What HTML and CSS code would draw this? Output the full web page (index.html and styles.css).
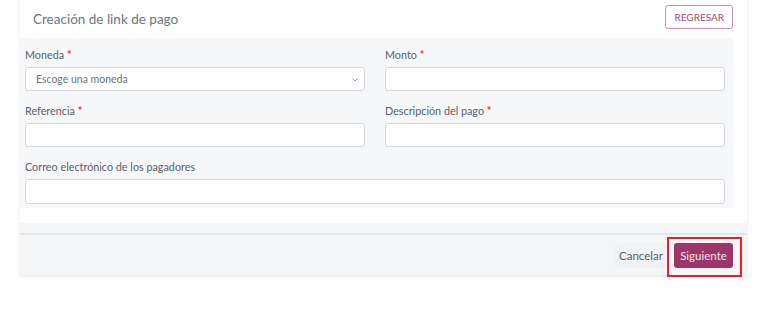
FILE: index.html
```html
<!DOCTYPE html>
<html lang="es">
<head>
<meta charset="utf-8">
<link rel="stylesheet" href="styles.css">
</head>
<body>
<div class="card">
  <div class="card-header">
    <h1 class="title">Creación de link de pago</h1>
    <button class="btn btn-outline" type="button">REGRESAR</button>
  </div>
  <div class="card-body">
    <form class="form-panel">
      <div class="field">
        <label class="label">Moneda <span class="req">*</span></label>
        <div class="select">
          <span class="placeholder">Escoge una moneda</span>
          <svg class="chev" width="6" height="4" viewBox="0 0 6 4"><path d="M0.6 0.6l2.4 2.4 2.4-2.4" fill="none" stroke="#8a9096" stroke-width="0.9"/></svg>
        </div>
      </div>
      <div class="field">
        <label class="label">Monto <span class="req">*</span></label>
        <div class="input"></div>
      </div>
      <div class="field">
        <label class="label">Referencia <span class="req">*</span></label>
        <div class="input"></div>
      </div>
      <div class="field">
        <label class="label">Descripción del pago <span class="req">*</span></label>
        <div class="input"></div>
      </div>
      <div class="field full">
        <label class="label">Correo electrónico de los pagadores</label>
        <div class="input tall"></div>
      </div>
    </form>
    <div class="spacer"></div>
  </div>
  <div class="card-footer">
    <div class="footer-inner">
      <button class="btn btn-light" type="button">Cancelar</button>
      <span class="highlight"><button class="btn btn-primary" type="button">Siguiente</button></span>
    </div>
  </div>
</div>
</body>
</html>
```
FILE: styles.css
```css
* { box-sizing: border-box; }
html, body { height: 100%; }
body {
  margin: 0;
  min-height: 309px;
  padding-bottom: 20px;
  background: #fff;
  font-family: Lato, "Open Sans", sans-serif;
}
.card {
  margin-left: 20px;
  width: 727px;
  box-shadow: 0 1px 3px rgba(0,0,0,0.12);
  background: #fff;
}
.card-header {
  height: 38px;
  display: flex;
  align-items: center;
  justify-content: space-between;
  padding: 0 14px 0 13px;
}
.title {
  margin: 0;
  font-size: 13.5px;
  font-weight: 400;
  color: #6c757d;
  padding-bottom: 1px;
}
.btn {
  font-family: inherit;
  cursor: pointer;
  border-radius: 3px;
}
.btn-outline {
  height: 24px;
  padding: 0 8px;
  background: #fff;
  border: 1px solid #cf8db0;
  color: #a34b7a;
  font-size: 10px;
  margin-top: -5px;
}
.card-body {
  background: #fff;
}
.form-panel {
  width: 713px;
  height: 170px;
  background: #f6f7f9;
  padding: 10px 8px 0 5px;
  display: grid;
  grid-template-columns: 1fr 1fr;
  column-gap: 20px;
  row-gap: 13px;
  align-content: start;
}
.field { display: flex; flex-direction: column; }
.field.full { grid-column: 1 / -1; }
.label {
  font-size: 10.8px;
  line-height: 14px;
  color: #5a6168;
  margin-bottom: 5px;
}
.req { color: #e3342f; font-weight: 700; }
.input, .select {
  height: 24px;
  background: #fff;
  border: 1px solid #d3d7db;
  border-radius: 3px;
}
.input.tall { height: 25px; }
.select {
  display: flex;
  align-items: center;
  justify-content: space-between;
  padding: 0 6px 0 10px;
}
.placeholder { font-size: 10.5px; color: #6c757d; }
.chev { margin-top: 1px; }
.spacer {
  height: 15px;
  margin-left: 3px;
  background: #fff;
}
.card-footer {
  background: #f5f6f8;
  padding-top: 10px;
}
.footer-inner {
  height: 42px;
  border-top: 2px solid #e4e5e7;
  display: flex;
  align-items: center;
  justify-content: flex-end;
  padding-right: 5px;
}
.btn-light {
  height: 25px;
  width: 52px;
  padding: 0;
  border: none;
  background: #f1f2f4;
  color: #5a6168;
  font-size: 11.5px;
}
.highlight {
  display: inline-flex;
  border: 2px solid #ee1c24;
  padding: 4px 7px 7px 5px;
  margin-top: 2px;
  margin-bottom: -2px;
  position: relative;
  z-index: 1;
}
.btn-primary {
  height: 25px;
  width: 59px;
  padding: 0;
  border: none;
  background: #9c3569;
  color: #f3e3ec;
  font-size: 11.5px;
}
```
